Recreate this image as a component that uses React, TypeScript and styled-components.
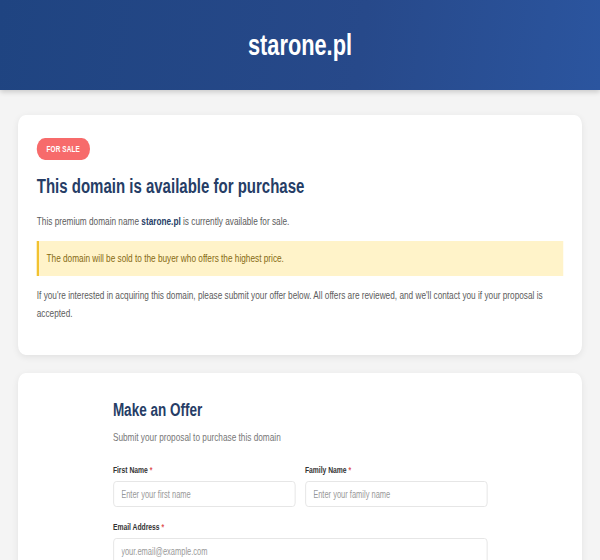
import React from "react";
import styled, { createGlobalStyle } from "styled-components";

// the page is laid out 800px wide and squeezed to the 600px frame
const GlobalStyle = createGlobalStyle`
  * { box-sizing: border-box; }
  body {
    margin: 0;
    overflow-x: hidden;
    background: #f4f4f4;
    font-family: "Liberation Sans", Arial, sans-serif;
    color: #555;
  }
`;

const Page = styled.div`
  width: 800px;
  transform: scaleX(0.75);
  transform-origin: 0 0;
`;

const Header = styled.header`
  height: 90px;
  display: flex;
  align-items: center;
  justify-content: center;
  background: linear-gradient(100deg, #1f4481 0%, #27498a 60%, #2b559f 100%);
  box-shadow: 0 2px 6px rgba(0, 0, 0, 0.18);
`;

const SiteTitle = styled.h1`
  margin: 0;
  color: #fff;
  font-size: 29px;
  font-weight: 700;
`;

const Main = styled.main`
  padding: 25px 24px 18px;
  display: flex;
  flex-direction: column;
  gap: 18px;
`;

const Card = styled.section<{ $pad?: string }>`
  background: #fff;
  border-radius: 10px;
  box-shadow: 0 2px 8px rgba(0, 0, 0, 0.08);
  padding: ${(p) => p.$pad || "23px 25px 33px"};
`;

const Badge = styled.span`
  display: inline-block;
  background: #f76b6b;
  color: #fff;
  font-size: 8.5px;
  font-weight: 700;
  letter-spacing: 0.2px;
  padding: 0 13px;
  height: 22px;
  line-height: 22px;
  border-radius: 14px;
`;

const Heading = styled.h2`
  margin: 14px 0 14px;
  color: #263d66;
  font-size: 20px;
  font-weight: 700;
  line-height: 24px;
`;

const Text = styled.p`
  margin: 0;
  font-size: 11px;
  line-height: 18px;
  color: #5c5c5c;
  strong {
    color: #263d66;
  }
`;

const Notice = styled.div`
  margin: 11px 0 10px;
  background: #fff3c9;
  border-left: 3px solid #f2c230;
  padding: 9px 10px;
  font-size: 11px;
  line-height: 17px;
  color: #866a12;
`;

const Form = styled.form`
  max-width: 499px;
  margin: 0 auto;
`;

const FormTitle = styled.h3`
  margin: 0 0 10px;
  color: #263d66;
  font-size: 18px;
  font-weight: 700;
  line-height: 22px;
`;

const FormSub = styled.p`
  margin: 0 0 22px;
  font-size: 11px;
  color: #777;
`;

const Row = styled.div`
  display: grid;
  grid-template-columns: 1fr 1fr;
  gap: 13px;
`;

const Field = styled.div`
  margin-bottom: 15px;
`;

const Label = styled.label`
  display: block;
  font-size: 9px;
  font-weight: 700;
  color: #333;
  margin-bottom: 6px;
  span {
    color: #e05555;
  }
`;

const Input = styled.input`
  width: 100%;
  height: 26px;
  padding: 0 10px;
  border: 1px solid #e2e2e2;
  border-radius: 4px;
  font-family: inherit;
  font-size: 10px;
  color: #333;
  &::placeholder {
    color: #999;
  }
`;

export default function App() {
  return (
    <>
      <GlobalStyle />
      <Page>
        <Header>
          <SiteTitle>starone.pl</SiteTitle>
        </Header>
        <Main>
          <Card>
            <Badge>FOR SALE</Badge>
            <Heading>This domain is available for purchase</Heading>
            <Text>
              This premium domain name <strong>starone.pl</strong> is currently available for sale.
            </Text>
            <Notice>The domain will be sold to the buyer who offers the highest price.</Notice>
            <Text>
              If you're interested in acquiring this domain, please submit your offer below. All
              offers are reviewed, and we'll contact you if your proposal is accepted.
            </Text>
          </Card>
          <Card $pad="26px 25px 26px">
            <Form>
              <FormTitle>Make an Offer</FormTitle>
              <FormSub>Submit your proposal to purchase this domain</FormSub>
              <Row>
                <Field>
                  <Label>
                    First Name <span>*</span>
                  </Label>
                  <Input placeholder="Enter your first name" />
                </Field>
                <Field>
                  <Label>
                    Family Name <span>*</span>
                  </Label>
                  <Input placeholder="Enter your family name" />
                </Field>
              </Row>
              <Field>
                <Label>
                  Email Address <span>*</span>
                </Label>
                <Input placeholder="your.email@example.com" />
              </Field>
            </Form>
          </Card>
        </Main>
      </Page>
    </>
  );
}
